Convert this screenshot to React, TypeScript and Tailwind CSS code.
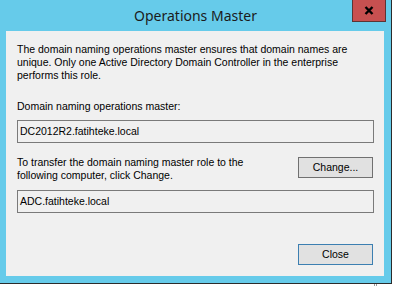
import React from "react";

export default function App() {
  return (
    <div className="w-[394px] h-[286px] bg-white relative overflow-hidden" style={{ fontFamily: '"Liberation Sans", Arial, sans-serif' }}>
      <div className="w-[392px] h-[284px] bg-[#66cbea] border-r border-b border-[#2b2b2b] flex flex-col relative">
        <div className="h-[31px] flex items-center justify-center shrink-0">
          <span className="text-[14px] text-[#1b1b1b] mt-[-1px]" style={{ fontFamily: '"Noto Sans", sans-serif' }}>Operations Master</span>
        </div>
        <div className="absolute left-[352px] top-0 w-[34px] h-[22px] bg-[#c75050] border border-t-0 border-[#5c3434] flex items-center justify-center">
          <svg width="10" height="9" viewBox="0 0 10 9">
            <path d="M1.5 1 L8.5 8 M8.5 1 L1.5 8" stroke="#000" strokeWidth="2.4" strokeLinecap="butt" />
          </svg>
        </div>
        <div className="ml-[6px] mr-[7px] h-[245px] bg-[#f0f0f0] pl-[11px] pr-[10px] pt-[12px] text-[10.5px] leading-[13px] text-black flex flex-col">
          <p>
            The domain naming operations master ensures that domain names are<br />
            unique. Only one Active Directory Domain Controller in the enterprise<br />
            performs this role.
          </p>
          <p className="mt-[18px]">Domain naming operations master:</p>
          <div className="mt-[7px] w-[357px] h-[23px] border border-[#7a7a7a] flex items-center pl-[2px]">
            DC2012R2.fatihteke.local
          </div>
          <div className="mt-[13px] flex items-start justify-between w-[356px]">
            <p>
              To transfer the domain naming master role to the<br />
              following computer, click Change.
            </p>
            <button className="w-[75px] h-[21px] mt-[1px] bg-[#e1e1e1] border border-[#707070] text-[10.5px] leading-[13px] text-black flex items-center justify-center">
              Change...
            </button>
          </div>
          <div className="mt-[8px] w-[357px] h-[23px] border border-[#7a7a7a] flex items-center pl-[2px]">
            ADC.fatihteke.local
          </div>
          <div className="mt-[31px] flex justify-end w-[356px]">
            <button className="w-[75px] h-[21px] bg-[#e1e1e1] border border-[#3c7fb1] text-[10.5px] leading-[13px] text-black flex items-center justify-center">
              Close
            </button>
          </div>
        </div>
      </div>
      <div className="absolute left-[374px] top-[284px] w-[1px] h-[2px] bg-[#9a9a9a]" />
      <div className="absolute left-[376px] top-[284px] w-[1px] h-[2px] bg-[#9a9a9a]" />
    </div>
  );
}
